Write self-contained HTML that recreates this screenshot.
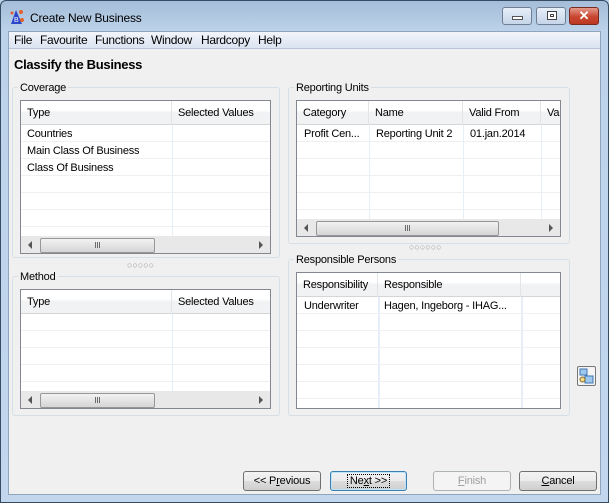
<!DOCTYPE html>
<html><head><meta charset="utf-8"><style>
*{box-sizing:border-box;margin:0;padding:0}
body{width:609px;height:503px;overflow:hidden;font-family:"Liberation Sans",sans-serif;font-size:11px;letter-spacing:-0.2px;color:#000;position:relative;background:#bcd3ea}
.a{position:absolute}
#frame{left:0;top:0;width:609px;height:503px;border:1px solid #364c64;border-radius:6px 6px 0 0;background:linear-gradient(#a5bdd8 0,#bcd2ea 30px,#c2d7ee 100%)}
#content{left:8px;top:31px;width:593px;height:464px;background:#f0f0f0;border:1px solid #8fa4bd}
#menu{left:9px;top:32px;width:591px;height:17px;background:linear-gradient(#f3f5fa,#dbe3f1);border-bottom:1px solid #b8c5da}
#menu span{position:absolute;top:1px;font-size:12px;letter-spacing:-0.3px}
.grp{border:1px solid #d5dfe5;border-radius:3px}
.lbl{background:#f0f0f0;padding:0 2px;line-height:14px}
.grid{background:#fff;border:1px solid #828790;overflow:hidden}
.hdr{position:absolute;left:0;top:0;height:24px;width:100%;background:linear-gradient(#fff 0,#fff 40%,#f1f2f4 50%,#f1f2f4);border-bottom:1px solid #d5d5d5}
.hc{position:absolute;top:0;height:24px;line-height:25px;padding-left:6px;border-right:1px solid #e3e4e6;white-space:nowrap}
.row{position:absolute;left:0;width:100%;height:17px;border-bottom:1px solid #f0f0f0}
.cell{position:absolute;top:0;height:17px;line-height:19px;padding-left:6px;white-space:nowrap}
.vl{position:absolute;width:1px;background:#e6eef8}
.sb{position:absolute;left:0;height:17px;width:100%;background:#e8e8e8;border-top:1px solid #e8e8e8}
.thumb{position:absolute;top:1px;height:15px;border:1px solid #979797;border-radius:2px;background:linear-gradient(#f2f2f2,#d5d5d5);text-align:center;font-size:8px;line-height:13px;color:#444}
.arr{position:absolute;top:4px;width:0;height:0;border-top:4px solid transparent;border-bottom:4px solid transparent}
.btn{position:absolute;top:471px;height:20px;border:1px solid #707070;border-radius:3px;background:linear-gradient(#f2f2f2 0,#ebebeb 50%,#dddddd 51%,#cfcfcf);text-align:center;line-height:18px}
.dots{position:absolute;font-size:9px;color:#999;letter-spacing:0}
.tb{position:absolute;top:7px;height:18px;border:1px solid #6f7f93;border-radius:3px;background:linear-gradient(#e6eef8,#c6d5e9)}
</style></head><body>
<div id="frame" class="a"></div>
<div class="a" style="left:10px;top:9px;width:14px;height:16px">
<svg width="14" height="16"><polygon points="6,1 1,15 12,15" fill="#2c48c8"/><text x="4" y="13" font-size="7" fill="#fff" font-family="Liberation Sans">B</text><circle cx="11" cy="3" r="2" fill="#e2622a"/><circle cx="12" cy="11" r="2" fill="#e2622a"/><circle cx="2" cy="4" r="1.5" fill="#e2622a"/></svg></div>
<div class="a" style="left:30px;top:11px;font-size:12px">Create New Business</div>
<div class="tb" style="left:502px;width:30px"><div class="a" style="left:9px;top:8px;width:11px;height:4px;background:#fff;border:1px solid #555"></div></div>
<div class="tb" style="left:536px;width:30px"><div class="a" style="left:10px;top:3px;width:10px;height:9px;border:1px solid #444;background:#fff"><div class="a" style="left:2px;top:2px;width:4px;height:3px;border:1px solid #444"></div></div></div>
<div class="tb" style="left:569px;width:30px;border-color:#7a2a20;background:linear-gradient(#e49a8c,#c9452f 55%,#bb3a24);color:#fff;text-align:center;font-weight:bold;font-size:13px;line-height:15px">✕</div>
<div id="content" class="a"></div>
<div id="menu" class="a">
<span style="left:5px">File</span><span style="left:31px">Favourite</span><span style="left:86px">Functions</span><span style="left:142px">Window</span><span style="left:192px">Hardcopy</span><span style="left:249px">Help</span></div>
<div class="a" style="left:14px;top:57px;font-weight:bold;font-size:13px;letter-spacing:-0.3px">Classify the Business</div>

<!-- Coverage -->
<div class="a grp" style="left:12px;top:87px;width:268px;height:171px"></div>
<div class="a lbl" style="left:18px;top:81px">Coverage</div>
<div class="a grid" style="left:20px;top:100px;width:251px;height:154px">
<div class="hdr"><div class="hc" style="left:0;width:151px">Type</div><div class="hc" style="left:151px;width:100px">Selected Values</div></div>
<div class="vl" style="left:151px;top:24px;height:112px"></div>
<div class="row" style="top:24px"><div class="cell">Countries</div></div>
<div class="row" style="top:41px"><div class="cell">Main Class Of Business</div></div>
<div class="row" style="top:58px"><div class="cell">Class Of Business</div></div>
<div class="row" style="top:75px"></div><div class="row" style="top:92px"></div><div class="row" style="top:109px"></div>
<div class="sb" style="top:135px"><div class="arr" style="left:7px;border-right:4px solid #555"></div><div class="thumb" style="left:19px;width:115px">III</div><div class="arr" style="left:238px;border-left:4px solid #555"></div></div>
</div>
<div class="dots" style="left:127px;top:260px">○○○○○</div>

<!-- Method -->
<div class="a grp" style="left:12px;top:276px;width:268px;height:140px"></div>
<div class="a lbl" style="left:18px;top:270px">Method</div>
<div class="a grid" style="left:20px;top:289px;width:251px;height:120px">
<div class="hdr"><div class="hc" style="left:0;width:151px">Type</div><div class="hc" style="left:151px;width:100px">Selected Values</div></div>
<div class="vl" style="left:151px;top:24px;height:77px"></div>
<div class="row" style="top:24px"></div><div class="row" style="top:41px"></div><div class="row" style="top:58px"></div><div class="row" style="top:75px"></div>
<div class="sb" style="top:101px"><div class="arr" style="left:7px;border-right:4px solid #555"></div><div class="thumb" style="left:19px;width:115px">III</div><div class="arr" style="left:238px;border-left:4px solid #555"></div></div>
</div>

<!-- Reporting Units -->
<div class="a grp" style="left:288px;top:87px;width:282px;height:157px"></div>
<div class="a lbl" style="left:294px;top:81px">Reporting Units</div>
<div class="a grid" style="left:296px;top:100px;width:265px;height:137px">
<div class="hdr"><div class="hc" style="left:0;width:72px">Category</div><div class="hc" style="left:72px;width:94px">Name</div><div class="hc" style="left:166px;width:78px">Valid From</div><div class="hc" style="left:244px;width:40px">Va</div></div>
<div class="vl" style="left:72px;top:24px;height:95px"></div><div class="vl" style="left:166px;top:24px;height:95px"></div><div class="vl" style="left:244px;top:24px;height:95px"></div>
<div class="row" style="top:24px"><div class="cell" style="left:1px">Profit Cen...</div><div class="cell" style="left:73px">Reporting Unit 2</div><div class="cell" style="left:167px">01.jan.2014</div></div>
<div class="row" style="top:41px"></div><div class="row" style="top:58px"></div><div class="row" style="top:75px"></div><div class="row" style="top:92px"></div>
<div class="sb" style="top:118px"><div class="arr" style="left:7px;border-right:4px solid #555"></div><div class="thumb" style="left:19px;width:183px">III</div><div class="arr" style="left:252px;border-left:4px solid #555"></div></div>
</div>
<div class="dots" style="left:409px;top:242px">○○○○○○</div>

<!-- Responsible Persons -->
<div class="a grp" style="left:288px;top:259px;width:282px;height:157px"></div>
<div class="a lbl" style="left:294px;top:253px">Responsible Persons</div>
<div class="a grid" style="left:296px;top:272px;width:265px;height:137px">
<div class="hdr"><div class="hc" style="left:0;width:81px">Responsibility</div><div class="hc" style="left:81px;width:143px">Responsible</div><div class="hc" style="left:224px;width:41px;border-right:0"></div></div>
<div class="vl" style="left:81px;top:24px;height:113px;width:2px"></div><div class="vl" style="left:224px;top:24px;height:113px;width:2px"></div>
<div class="row" style="top:24px"><div class="cell" style="left:1px">Underwriter</div><div class="cell" style="left:81px">Hagen, Ingeborg - IHAG...</div></div>
<div class="row" style="top:41px"></div><div class="row" style="top:58px"></div><div class="row" style="top:75px"></div><div class="row" style="top:92px"></div><div class="row" style="top:109px"></div>
</div>

<!-- side icon -->
<div class="a" style="left:577px;top:366px;width:19px;height:20px;border:1px solid #777;border-radius:2px;background:#f4f4f4">
<svg width="17" height="18" style="position:absolute;left:0;top:0"><rect x="2" y="2" width="7" height="6" fill="#9fc8ee" stroke="#3f76b4"/><rect x="7" y="9" width="8" height="7" fill="#9fc8ee" stroke="#3f76b4"/><circle cx="4.5" cy="12.5" r="2.5" fill="#f3d88a" stroke="#8a6a20"/></svg></div>

<!-- buttons -->
<div class="btn" style="left:243px;width:78px">&lt;&lt; P<u>r</u>evious</div>
<div class="btn" style="left:330px;width:77px;border-color:#3c7fb1;box-shadow:inset 0 0 0 1px #bde4fb"><span style="outline:1px dotted #000;padding:0 2px">Ne<u>x</u>t &gt;&gt;</span></div>
<div class="btn" style="left:433px;width:78px;border-color:#adb2b5;background:#f4f4f4;color:#a0a0a0"><u>F</u>inish</div>
<div class="btn" style="left:519px;width:78px"><u>C</u>ancel</div>
</body></html>
